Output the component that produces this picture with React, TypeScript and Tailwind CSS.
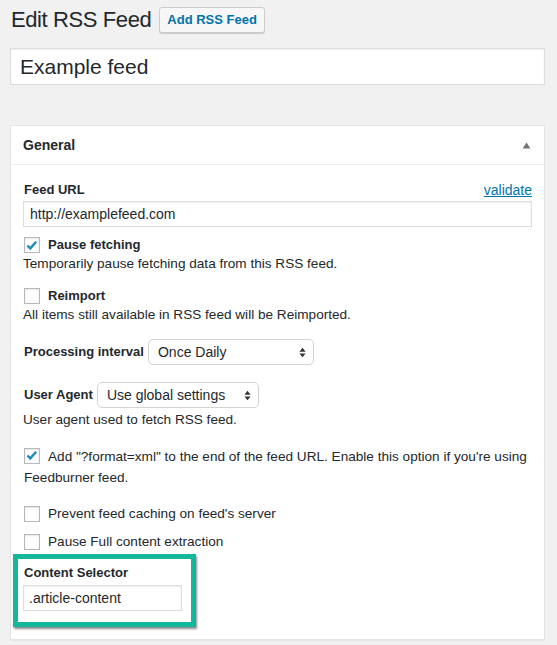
import React from "react";

const font = { fontFamily: '"Liberation Sans", Arial, sans-serif' };

function Checkbox({ checked }: { checked?: boolean }) {
  return (
    <span className="inline-flex items-center justify-center w-4 h-4 shrink-0 border border-[#b4b9be] bg-white shadow-[inset_0_1px_2px_rgba(0,0,0,0.1)] align-middle">
      {checked && (
        <svg viewBox="0 0 16 16" className="w-[15px] h-[15px]">
          <path d="M2.8 8l3.2 3.3 6.8-7.6" fill="none" stroke="#1e8cbe" strokeWidth="2.8" />
        </svg>
      )}
    </span>
  );
}

function Select({ value, width }: { value: string; width: string }) {
  return (
    <div
      className={`${width} h-[26px] flex items-center justify-between pl-[9px] pr-[7px] border border-[#d4d4d4] rounded-[5px] bg-white text-[14px] text-[#23282d]`}
    >
      <span>{value}</span>
      <svg viewBox="0 0 8 12" className="w-[7px] h-[11px]">
        <path d="M4 0.5L7.5 5H0.5z M4 11.5L0.5 7H7.5z" fill="#333" />
      </svg>
    </div>
  );
}

export default function App() {
  return (
    <div className="min-h-[645px] bg-[#f1f1f1] pl-[10px] pr-[12px] text-[#23282d] text-[13.6px]" style={font}>
      <div className="flex items-center pt-[7px] h-[33px]">
        <h1 className="text-[22px] leading-none pl-px tracking-[-0.4px]">Edit RSS Feed</h1>
        <button className="ml-[8px] h-[26px] px-[7px] border border-[#ccc] bg-[#f7f7f7] rounded-[3px] text-[13px] font-bold text-[#0073aa] shadow-[0_1px_0_#ccc]">
          Add RSS Feed
        </button>
      </div>

      <div className="mt-[15px] h-[37px] flex items-center bg-white border border-[#ddd] shadow-[inset_0_1px_2px_rgba(0,0,0,0.07)] px-[9px] text-[21px] text-[#23282d]">
        Example feed
      </div>

      <div className="mt-[40px] bg-white border border-[#e5e5e5] shadow-[0_1px_1px_rgba(0,0,0,0.04)]">
        <div className="h-[39px] flex items-center justify-between px-[12px] border-b border-[#eee]">
          <span className="text-[14px] font-bold">General</span>
          <svg viewBox="0 0 10 8" className="w-[9px] h-[7px] mr-[1px]">
            <path d="M5 0.5L9.5 7.5H0.5z" fill="#72777c" />
          </svg>
        </div>

        <div className="px-[12px] pt-[16px] pb-[12px]">
          <div className="flex justify-between items-center h-[18px] pl-px">
            <span className="font-bold text-[13px]">Feed URL</span>
            <a className="text-[#0073aa] underline text-[14px]">validate</a>
          </div>
          <div className="mt-[2px] h-[26px] flex items-center border border-[#ddd] shadow-[inset_0_1px_2px_rgba(0,0,0,0.07)] px-[6px] text-[14px]">
            http://examplefeed.com
          </div>

          <div className="mt-[10px] flex items-center gap-[8px] h-[16px] px-px">
            <Checkbox checked />
            <span className="font-bold text-[13px]">Pause fetching</span>
          </div>
          <p className="mt-[2px] leading-[18px]">Temporarily pause fetching data from this RSS feed.</p>

          <div className="mt-[15px] flex items-center gap-[8px] h-[16px] px-px">
            <Checkbox />
            <span className="font-bold text-[13px]">Reimport</span>
          </div>
          <p className="mt-[2px] leading-[18px]">All items still available in RSS feed will be Reimported.</p>

          <div className="mt-[15px] flex items-center gap-[4px] px-px">
            <span className="font-bold text-[13px]">Processing interval</span>
            <Select value="Once Daily" width="w-[166px]" />
          </div>

          <div className="mt-[17px] flex items-center gap-[4px] px-px">
            <span className="font-bold text-[13px]">User Agent</span>
            <Select value="Use global settings" width="w-[162px]" />
          </div>
          <p className="mt-[3px] leading-[18px]">User agent used to fetch RSS feed.</p>

          <p className="mt-[17px] leading-[21px] px-px">
            <span className="inline-flex mr-[8px] -mt-[3px] align-middle">
              <Checkbox checked />
            </span>
            Add "?format=xml" to the end of the feed URL. Enable this option if you're using Feedburner feed.
          </p>

          <div className="mt-[18px] flex items-center gap-[8px] h-[16px] px-px">
            <Checkbox />
            <span>Prevent feed caching on feed's server</span>
          </div>

          <div className="mt-[12px] flex items-center gap-[8px] h-[16px] px-px">
            <Checkbox />
            <span>Pause Full content extraction</span>
          </div>

          <div className="mt-[4px] -ml-[10px] w-[183px] border-[5px] border-[#13b89c] shadow-[1px_2px_2px_rgba(0,0,0,0.45)] pl-[5px] pt-[5px] pb-[11px]">
            <div className="font-bold text-[13px] leading-[18px] px-px">Content Selector</div>
            <div className="mt-[3px] w-[159px] h-[26px] flex items-center border border-[#ddd] shadow-[inset_0_1px_2px_rgba(0,0,0,0.07)] px-[5px] text-[14px]">
              .article-content
            </div>
          </div>
        </div>
      </div>
    </div>
  );
}
